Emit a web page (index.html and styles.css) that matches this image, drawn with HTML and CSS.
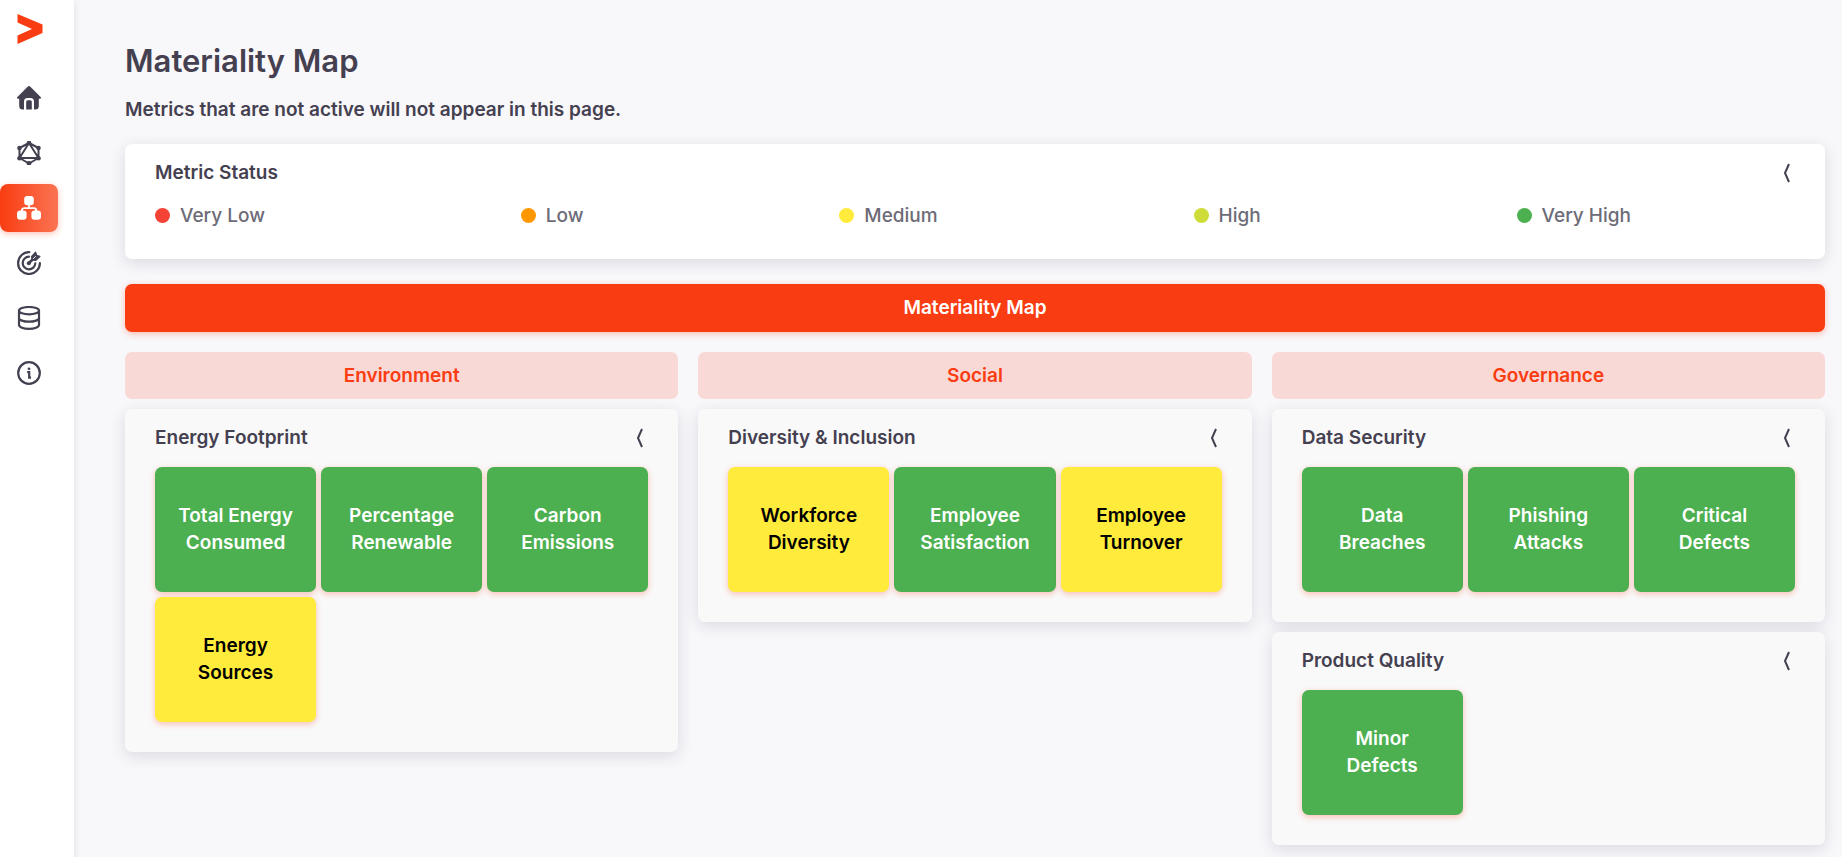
FILE: index.html
```html
<!DOCTYPE html>
<html lang="en">
<head>
<meta charset="utf-8">
<meta name="viewport" content="width=device-width, initial-scale=1">
<title>Materiality Map</title>
<link rel="stylesheet" href="styles.css">
</head>
<body>
<div class="layout">
  <aside class="sidebar">
    <a class="logo" href="#" aria-label="Start">
      <svg viewBox="0 0 26 32" width="26" height="32"><path d="M.5 1 25.500 11.500v8.500L.5 31v-8.500L15 16 .5 9.500z" fill="#f93c11"/></svg>
    </a>
    <nav class="menu" aria-label="Main">
      <a class="menu-item" href="#" aria-label="Home">
        <svg class="icon" viewBox="0 0 24 24"><path fill="currentColor" d="M10.600.7a2 2 0 0 1 2.800 0L23.600 11c.8.900.4 1.700-.6 1.700h-1.200V20a3.600 3.600 0 0 1-3.600 3.600H17V15.500a3.500 3.500 0 0 0-3.500-3.500h-3A3.500 3.500 0 0 0 7 15.500v8.100H5.800A3.600 3.600 0 0 1 2.200 20v-7.300H1c-1 0-1.400-.8-.6-1.700z"/><path fill="currentColor" d="M9.200 23.600v-7.800a1.500 1.500 0 0 1 1.500-1.500h2.600a1.500 1.500 0 0 1 1.500 1.500v7.800z"/></svg>
      </a>
      <a class="menu-item" href="#" aria-label="Network">
        <svg class="icon" viewBox="0 0 24 24" fill="none" stroke="currentColor" stroke-width="2" stroke-linejoin="round"><path d="M12 2 21.500 7v10L12 22.500 2.500 17V7zM12 2l9.500 15h-19z"/><g fill="currentColor" stroke="none"><circle cx="12" cy="2" r="2.300"/><circle cx="21.500" cy="7" r="2.300"/><circle cx="21.500" cy="17.300" r="2.300"/><circle cx="12" cy="22.300" r="2.300"/><circle cx="2.500" cy="17.300" r="2.300"/><circle cx="2.500" cy="7" r="2.300"/></g></svg>
      </a>
      <a class="menu-item is-active" href="#" aria-label="Materiality map" aria-current="page">
        <svg class="icon" viewBox="0 0 24 24"><g fill="currentColor"><rect x="7.200" y="0" width="9.600" height="9.300" rx="3.200"/><rect x="0" y="14.400" width="9.600" height="9.300" rx="3.200"/><rect x="14.400" y="14.400" width="9.600" height="9.300" rx="3.200"/></g><path d="M12 8.500v3.800M4.800 15v-.5a2.300 2.300 0 0 1 2.300-2.300h9.800a2.300 2.300 0 0 1 2.300 2.300v.5" fill="none" stroke="currentColor" stroke-width="1.800"/></svg>
      </a>
      <a class="menu-item" href="#" aria-label="Targets">
        <svg class="icon" viewBox="0 0 24 24" fill="none" stroke="currentColor" stroke-width="2.200" stroke-linecap="round"><path d="M12.300 1.200A10.900 10.900 0 1 0 22.900 12"/><path d="M12 5.700a6.300 6.300 0 1 0 6.300 6.600"/><circle cx="11.800" cy="12.200" r="2" fill="currentColor" stroke="none"/><path d="m12 12 5.200-5.200" stroke-width="2.600"/><path d="M14.700 5.500 18.600 1.300l.9 3.200 3.300.9-4.200 4-3.500-.5z" fill="currentColor" stroke-width="1.400" stroke-linejoin="round"/><path d="m16.500 7.500 2-2" stroke="#fff" stroke-width="1"/></svg>
      </a>
      <a class="menu-item" href="#" aria-label="Data">
        <svg class="icon" viewBox="0 0 24 24" fill="none" stroke="currentColor" stroke-width="2.200"><ellipse cx="12" cy="4.700" rx="10" ry="3.700"/><path d="M2 4.700v14.400c0 2 4.500 3.700 10 3.700s10-1.700 10-3.700V4.700M2 12c0 2 4.500 3.700 10 3.700S22 14 22 12"/></svg>
      </a>
      <a class="menu-item" href="#" aria-label="Information">
        <svg class="icon" viewBox="0 0 24 24" fill="none" stroke="currentColor" stroke-width="2.200"><circle cx="12" cy="12" r="10.800"/><path d="M10.200 11.200h2v5.500h1.800" /><circle cx="12" cy="7.800" r="1.400" fill="currentColor" stroke="none"/></svg>
      </a>
    </nav>
  </aside>

  <main class="content">
    <h1 class="title">Materiality Map</h1>
    <p class="subtitle">Metrics that are not active will not appear in this page.</p>

    <section class="card status-card">
      <header class="card-header">
        <h2 class="card-title">Metric Status</h2>
        <button class="toggle" type="button" aria-label="Collapse Metric Status"><svg viewBox="0 0 6 20" width="6" height="20"><path d="M5 1 1 10l4 9"/></svg></button>
      </header>
      <ul class="legend">
        <li class="legend-item"><span class="dot dot-very-low"></span>Very Low</li>
        <li class="legend-item"><span class="dot dot-low"></span>Low</li>
        <li class="legend-item"><span class="dot dot-medium"></span>Medium</li>
        <li class="legend-item"><span class="dot dot-high"></span>High</li>
        <li class="legend-item"><span class="dot dot-very-high"></span>Very High</li>
      </ul>
    </section>

    <h2 class="banner">Materiality Map</h2>

    <div class="columns">
      <section class="column">
        <h3 class="column-title">Environment</h3>
        <article class="card topic">
          <header class="card-header">
            <h4 class="card-title">Energy Footprint</h4>
            <button class="toggle" type="button" aria-label="Collapse Energy Footprint"><svg viewBox="0 0 6 20" width="6" height="20"><path d="M5 1 1 10l4 9"/></svg></button>
          </header>
          <div class="tiles">
            <button class="tile tile-green" type="button">Total Energy Consumed</button>
            <button class="tile tile-green" type="button">Percentage Renewable</button>
            <button class="tile tile-green" type="button">Carbon Emissions</button>
            <button class="tile tile-yellow" type="button">Energy Sources</button>
          </div>
        </article>
      </section>

      <section class="column">
        <h3 class="column-title">Social</h3>
        <article class="card topic">
          <header class="card-header">
            <h4 class="card-title">Diversity &amp; Inclusion</h4>
            <button class="toggle" type="button" aria-label="Collapse Diversity and Inclusion"><svg viewBox="0 0 6 20" width="6" height="20"><path d="M5 1 1 10l4 9"/></svg></button>
          </header>
          <div class="tiles">
            <button class="tile tile-yellow" type="button">Workforce Diversity</button>
            <button class="tile tile-green" type="button">Employee Satisfaction</button>
            <button class="tile tile-yellow" type="button">Employee Turnover</button>
          </div>
        </article>
      </section>

      <section class="column">
        <h3 class="column-title">Governance</h3>
        <article class="card topic">
          <header class="card-header">
            <h4 class="card-title">Data Security</h4>
            <button class="toggle" type="button" aria-label="Collapse Data Security"><svg viewBox="0 0 6 20" width="6" height="20"><path d="M5 1 1 10l4 9"/></svg></button>
          </header>
          <div class="tiles">
            <button class="tile tile-green" type="button">Data Breaches</button>
            <button class="tile tile-green" type="button">Phishing Attacks</button>
            <button class="tile tile-green" type="button">Critical Defects</button>
          </div>
        </article>
        <article class="card topic">
          <header class="card-header">
            <h4 class="card-title">Product Quality</h4>
            <button class="toggle" type="button" aria-label="Collapse Product Quality"><svg viewBox="0 0 6 20" width="6" height="20"><path d="M5 1 1 10l4 9"/></svg></button>
          </header>
          <div class="tiles">
            <button class="tile tile-green" type="button">Minor Defects</button>
          </div>
        </article>
      </section>
    </div>
  </main>
</div>
</body>
</html>
```

FILE: styles.css
```css
* {
  box-sizing: border-box;
}

body {
  margin: 0;
  background: #f8f7fa;
  color: #444050;
  font-family: Inter, Lato, sans-serif;
  font-size: 19px;
  font-weight: 600;
  line-height: 27px;
}

h1, h2, h3, h4, p, ul {
  margin: 0;
  padding: 0;
  font-size: inherit;
  font-weight: inherit;
}

button {
  padding: 0;
  border: 0;
  background: none;
  color: inherit;
  font: inherit;
  cursor: pointer;
}

.layout {
  display: flex;
  min-height: 100vh;
}

.sidebar {
  flex: 0 0 74px;
  background: #fff;
  box-shadow: 0 2px 8px rgba(47, 43, 61, 0.12);
}

.logo {
  display: flex;
  height: 74px;
  padding: 13px 0 0 17px;
}

.menu {
  display: flex;
  flex-direction: column;
  gap: 7px;
  width: 58px;
}

.menu-item {
  display: flex;
  align-items: center;
  justify-content: flex-end;
  height: 48px;
  padding-right: 17px;
  border-radius: 8px;
  color: #444050;
}

.menu-item.is-active {
  background: linear-gradient(90deg, #f93c11, #fb7453);
  box-shadow: 0 2px 6px rgba(249, 60, 17, 0.3);
  color: #fff;
}

.icon {
  width: 24px;
  height: 24px;
}

.content {
  flex: 1;
  padding: 41px 17px 12px 51px;
}

.title {
  font-size: 31px;
  line-height: 40px;
}

.subtitle {
  margin: 15px 0 21px;
}

.card {
  border-radius: 7px;
  box-shadow: 0 4px 16px rgba(47, 43, 61, 0.14);
}

.card-header {
  display: flex;
  align-items: center;
  justify-content: space-between;
  padding-right: 5px;
}

.toggle {
  display: flex;
  align-items: center;
  justify-content: center;
  height: 27px;
}

.toggle path {
  fill: none;
  stroke: #444050;
  stroke-width: 2;
}

.status-card {
  padding: 15px 30px 30px;
  background: #fff;
}

.legend {
  display: flex;
  justify-content: space-between;
  margin-top: 16px;
  padding-right: 10%;
  list-style: none;
  color: #6d6b77;
  font-weight: 500;
}

.legend-item {
  display: flex;
  align-items: center;
  gap: 10px;
}

.dot {
  width: 15px;
  height: 15px;
  border-radius: 50%;
}

.dot-very-low { background: #f44336; }
.dot-low { background: #ff9800; }
.dot-medium { background: #ffeb3b; }
.dot-high { background: #cddc39; }
.dot-very-high { background: #4caf50; }

.banner {
  margin: 25px 0 20px;
  padding: 10px 0 11px;
  border-radius: 7px;
  background: #f93c11;
  box-shadow: 0 2px 6px rgba(249, 60, 17, 0.3);
  color: #fff;
  text-align: center;
}

.columns {
  display: grid;
  grid-template-columns: repeat(3, 1fr);
  align-items: start;
  gap: 20px;
}

.column {
  display: flex;
  flex-direction: column;
  gap: 10px;
}

.column-title {
  padding: 10px 0;
  border-radius: 7px;
  background: #f9d9d6;
  color: #f93c11;
  text-align: center;
}

.topic {
  padding: 15px 30px 30px;
  background: #f9f9f9;
}

.tiles {
  display: grid;
  grid-template-columns: repeat(3, 1fr);
  gap: 5px;
  margin-top: 16px;
}

.tile {
  min-height: 125px;
  padding: 0 20px 2px;
  border-radius: 7px;
  box-shadow: 0 2px 6px rgba(249, 60, 17, 0.3);
}

.tile-green {
  background: #4caf50;
  color: #fff;
}

.tile-yellow {
  background: #ffeb3b;
  color: #000;
}
```
